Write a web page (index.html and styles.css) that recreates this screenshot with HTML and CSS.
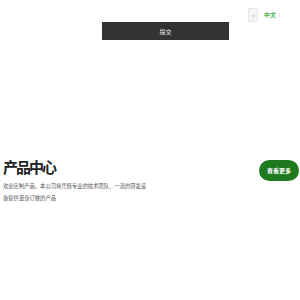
FILE: index.html
```html
<!DOCTYPE html>
<html lang="zh-CN">
<head>
    <meta charset="UTF-8">
    <meta name="viewport" content="width=device-width, initial-scale=1.0">
    <title>产品中心</title>
    <link rel="stylesheet" href="styles.css">
</head>
<body>
    <div class="top">
        <div class="submit-wrap">
            <button class="submit" type="button">提交</button>
        </div>
        <div class="lang">
            <span class="arrow">›</span>
            <span class="cur">中文</span>
            <span class="sep">/</span>
        </div>
    </div>

    <div class="products">
        <div class="intro">
            <h2>产品中心</h2>
            <p>欢迎定制产品，本公司将凭借专业的技术团队、一流的研发设备提供量身订做的产品</p>
        </div>
        <a class="more" href="#">查看更多</a>
    </div>
</body>
</html>
```

FILE: styles.css
```css
body { margin: 0; background: #fff; color: #333; font-family: "Noto Sans CJK SC", "Noto Sans", sans-serif; width: 300px; height: 300px; overflow: hidden; }
.top { display: flex; height: 40px; }
.submit-wrap { padding: 22px 0 0 102px; }
.submit { display: block; width: 127px; height: 18px; border: none; background: #333; color: #eee; font-family: inherit; font-size: 6px; padding: 0; }
.lang { display: flex; align-items: flex-start; padding: 8px 0 0 19px; font-size: 6px; }
.arrow { display: flex; align-items: center; justify-content: center; width: 10px; height: 14px; border: 1px solid #e8e8e8; background: #f6f6f6; color: #aaa; font-size: 9px; box-sizing: border-box; }
.cur { color: #4caf50; margin: 2px 0 0 6px; font-weight: bold; }
.sep { color: #bbb; margin: 2px 0 0 2px; }
.products { display: flex; justify-content: space-between; align-items: flex-start; padding: 117px 1px 0 3px; }
.intro { width: 145px; }
.intro h2 { margin: 0; font-size: 15px; line-height: 20px; font-weight: bold; color: #222; letter-spacing: -2px; }
.intro p { margin: 3px 0 0; font-size: 5.3px; line-height: 12px; color: #555; }
.more { display: flex; align-items: center; justify-content: center; width: 40px; height: 21px; margin-top: 3px; border-radius: 11px; background: #1f7a1f; color: #fff; font-size: 6px; font-weight: bold; text-decoration: none; }
```
